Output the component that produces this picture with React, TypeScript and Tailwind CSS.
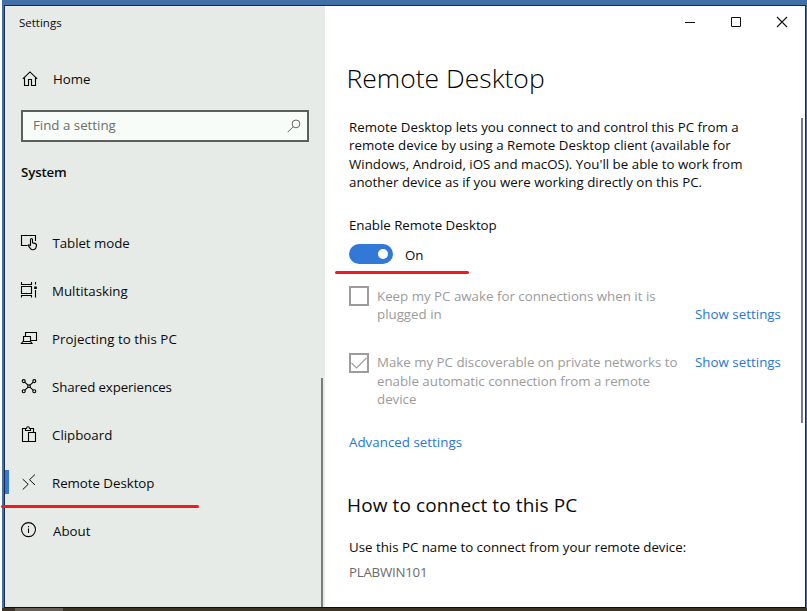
import type { ReactNode } from 'react';

function Glyph({ children, className = '' }: { children: ReactNode; className?: string }) {
  return (
    <svg
      width="18"
      height="18"
      viewBox="0 0 18 18"
      fill="none"
      stroke="#000"
      strokeWidth="1.1"
      className={`shrink-0 ${className}`}
    >
      {children}
    </svg>
  );
}

const homeIcon = (
  <Glyph>
    <path d="M1.8 8.9 L9 1.9 L16.2 8.9 M3.5 7.5 V15.5 H7.5 V9.5 H10.5 V15.5 H14.5 V7.5" />
  </Glyph>
);

const items = [
  {
    label: 'Tablet mode',
    spacing: 'tracking-[-0.06px] pl-[0.5px]',
    icon: (
      <Glyph>
        <path d="M7.5 11.5 H1.5 V1.5 H15.5 V7" />
        <path d="M10.5 11.8 V5.7 C10.5 4.1 12.5 4.1 12.5 5.7 V8.8 L15 9.4 C16.3 9.8 16.7 10.6 16.4 12 L15.7 14.3 C14.8 16.2 11.5 16.2 10.5 14.6 L8.2 11.6 C8 10.6 9.2 10.1 10.5 11.8" />
      </Glyph>
    ),
  },
  {
    label: 'Multitasking',
    spacing: '',
    icon: (
      <Glyph>
        <path d="M1.5 0 V2.5 H11.5 V0 M1.5 4.5 H11.5 V11.5 H1.5 Z M1.5 15.5 V13.5 H11.5 V15.5 M15.5 0 V2.5 M15.5 8 V15.5" />
        <path d="M14.2 4.5 h2.6 v2.6 h-2.6z" fill="#000" stroke="none" />
      </Glyph>
    ),
  },
  {
    label: 'Projecting to this PC',
    spacing: 'tracking-[0.03px]',
    icon: (
      <Glyph>
        <path d="M5.5 6.5 V2.5 H16.5 V10.5 H11 M3.5 11.5 V6.5 H10.5 V11.5 M1.5 13.5 H12 L10.5 11.5 H3 Z" />
      </Glyph>
    ),
  },
  {
    label: 'Shared experiences',
    spacing: 'tracking-[-0.12px]',
    icon: (
      <Glyph>
        <circle cx="3.7" cy="3.1" r="1.5" />
        <circle cx="14.3" cy="3.1" r="1.5" />
        <circle cx="3.7" cy="13.3" r="1.5" />
        <circle cx="14.3" cy="13.3" r="1.5" />
        <circle cx="9" cy="8.2" r="1.3" />
        <path d="M4.7 4.1 L8 7.2 M13.3 4.1 L10 7.2 M4.7 12.3 L8 9.2 M13.3 12.3 L10 9.2" />
      </Glyph>
    ),
  },
  {
    label: 'Clipboard',
    spacing: '',
    icon: (
      <Glyph>
        <path d="M8 15.5 H2.5 V2.5 H5 M11 2.5 H13.5 V6 M5.5 4.5 V2.5 H6.5 C6.8 .2 9.2 .2 9.5 2.5 H10.5 V4.5 Z M8.5 6.5 H15.5 V15.5 H8.5 Z" />
      </Glyph>
    ),
  },
  {
    label: 'Remote Desktop',
    spacing: 'tracking-[-0.04px]',
    active: true,
    icon: (
      <Glyph>
        <path d="M2.7 5.1 L8.2 10.3 L2.7 15.6 M15 .5 L9.5 5.7 L15 11" strokeWidth="0.95" />
      </Glyph>
    ),
  },
  {
    label: 'About',
    spacing: 'pl-px',
    icon: (
      <Glyph>
        <circle cx="8.5" cy="7.6" r="7" />
        <path d="M8.5 6.5 V11 M8.5 4 V5.2" />
      </Glyph>
    ),
  },
];

function Sidebar() {
  return (
    <aside className="relative h-[601px] w-[320px] shrink-0 bg-[#e6ebe7]">
      <div className="flex h-[33px] items-center pl-[14px] text-[11.5px]">Settings</div>
      <div className="mt-4 flex h-12 items-center pl-4">
        {homeIcon}
        <span className="ml-[14px] pt-[2px]">Home</span>
      </div>
      <div className="mt-[7px] ml-4 flex h-8 w-72 items-center justify-between border-2 border-[#5c605c] bg-[#f7fcf8] pr-[5px] pl-[10px] text-[#6b6f6c]">
        <span>Find a setting</span>
        <svg width="16" height="16" viewBox="0 0 16 16" fill="none" stroke="#666">
          <circle cx="10" cy="5.9" r="3.9" />
          <path d="M7.2 8.7 L1.7 14.2" />
        </svg>
      </div>
      <h2 className="mt-[18px] flex h-6 items-center pt-[2px] pl-4 font-semibold tracking-[-0.15px]">System</h2>
      <nav className="mt-[35px]">
        {items.map((item) => (
          <div key={item.label} className="flex h-12 items-center">
            <span className={`mb-[2px] h-6 w-1 shrink-0 ${item.active ? 'bg-[#3279d7]' : ''}`} />
            <span className="ml-[11px] flex">{item.icon}</span>
            <span className={`ml-[14px] pt-[2px] ${item.spacing}`}>{item.label}</span>
          </div>
        ))}
      </nav>
      <div className="absolute top-[372px] right-[2px] h-[229px] w-[2px] bg-[#7b7d7b]" />
    </aside>
  );
}

function WindowControls() {
  return (
    <div className="flex h-8 justify-end">
      <svg width="46" height="32" fill="none" stroke="#111">
        <path d="M18 16.5 H28" />
      </svg>
      <svg width="46" height="32" fill="none" stroke="#111">
        <path d="M18.5 11.5 H27.5 V20.5 H18.5 Z" />
      </svg>
      <svg width="46" height="32" fill="none" stroke="#111" strokeWidth="1.1">
        <path d="M18 11 L28 21 M28 11 L18 21" />
      </svg>
    </div>
  );
}

function Option({
  lines,
  checked,
  textClass,
  linkClass,
}: {
  lines: string[];
  checked?: boolean;
  textClass: string;
  linkClass: string;
}) {
  return (
    <div className="flex">
      <span className="flex h-5 w-5 shrink-0 border-2 border-[#9c9c9c]">
        {checked && (
          <svg width="16" height="16" fill="none" stroke="#9c9c9c" strokeWidth="1.1">
            <path d="M.5 8 L5.5 13 L15.5 3" />
          </svg>
        )}
      </span>
      <div className={`ml-2 w-[318px] shrink-0 text-[#9b9b9b] ${textClass}`}>
        {lines.map((line) => (
          <div key={line} className="whitespace-nowrap">{line}</div>
        ))}
      </div>
      <a className={`leading-[18.4px] tracking-[0.03px] whitespace-nowrap text-[#2876d3] ${linkClass}`}>Show settings</a>
    </div>
  );
}

const intro = [
  'Remote Desktop lets you connect to and control this PC from a',
  'remote device by using a Remote Desktop client (available for',
  "Windows, Android, iOS and macOS). You'll be able to work from",
  'another device as if you were working directly on this PC.',
];

function Content() {
  return (
    <main className="relative h-[601px] w-[480px] bg-white">
      <WindowControls />
      <div className="pl-6">
        <h1 className="mt-5 -ml-[2.5px] h-10 text-[26.5px] leading-10 font-light text-black">Remote Desktop</h1>
        <div className="mt-5 h-[74px] leading-[18.4px] tracking-[0.02px] whitespace-nowrap">
          {intro.map((line) => (
            <div key={line}>{line}</div>
          ))}
        </div>
        <div className="mt-[23px] h-[21px] leading-5 tracking-[-0.03px]">Enable Remote Desktop</div>
        <div className="mt-2 flex h-5 items-center">
          <span className="flex h-5 w-11 items-center justify-end rounded-full bg-[#3279d7] pr-[5px]">
            <span className="h-[10px] w-[10px] rounded-full bg-white" />
          </span>
          <span className="ml-3 pt-[2px] leading-5">On</span>
        </div>
        <div className="mt-[22px] h-[67px]">
          <Option
            lines={['Keep my PC awake for connections when it is', 'plugged in']}
            textClass="pt-[0.6px] leading-[18.3px]"
            linkClass="pt-[19px]"
          />
        </div>
        <div className="h-[79px]">
          <Option
            checked
            lines={[
              'Make my PC discoverable on private networks to',
              'enable automatic connection from a remote',
              'device',
            ]}
            textClass="leading-[18.6px] tracking-[-0.01px]"
            linkClass=""
          />
        </div>
        <a className="flex h-5 items-center pt-[2px] tracking-[0.03px] text-[#2876d3]">Advanced settings</a>
        <h2 className="mt-[38px] -ml-[2px] h-[30px] text-[19px] leading-[30px] tracking-[0.12px]">How to connect to this PC</h2>
        <div className="mt-[17px] h-5 leading-5 tracking-[-0.01px]">Use this PC name to connect from your remote device:</div>
        <div className="mt-[5px] h-5 leading-5 tracking-[-0.25px] text-[#6b6b6b]">PLABWIN101</div>
      </div>
      <div className="absolute top-[112px] right-[2px] h-[305px] w-[2px] bg-[#7b7b7b]" />
    </main>
  );
}

export default function App() {
  return (
    <div className="relative h-[611px] w-[807px] overflow-hidden bg-[#426fa8] font-['Open_Sans','Noto_Sans',sans-serif] text-[13.3px] text-[#0a0a0a]">
      <div className="flex h-[608px] border-l-2 border-white pt-[5px] pl-[2px]">
        <div className="flex h-[603px] w-[802px] border border-[#1b2a45] border-b-[#0b0f14]">
          <Sidebar />
          <Content />
        </div>
      </div>
      <div className="h-[3px] border-l-2 border-white bg-[#3c3527] pl-[13px]">
        <div className="h-[3px] w-12 bg-[#686058]" />
      </div>
      <div className="absolute top-[505px] left-[1px] h-[3px] w-[198px] rounded-full bg-[#ee1c20]" />
      <div className="absolute top-[271px] left-[335px] h-[3px] w-[134px] rounded-full bg-[#ee1c20]" />
    </div>
  );
}
